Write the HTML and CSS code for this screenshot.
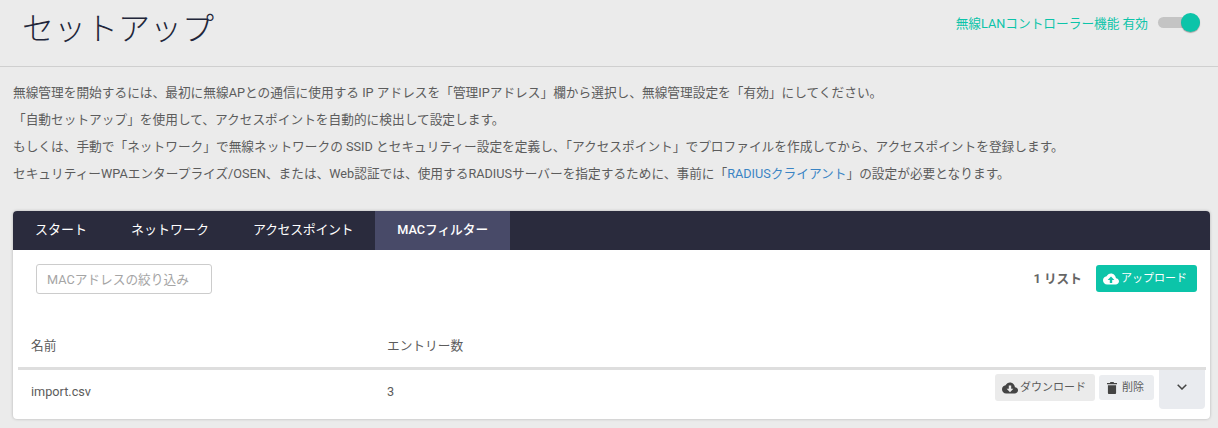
FILE: index.html
```html
<!DOCTYPE html>
<html lang="ja">
<head>
<meta charset="utf-8">
<title>セットアップ</title>
<link rel="stylesheet" href="styles.css">
</head>
<body>
<header class="page-header">
  <h1 class="title">セットアップ</h1>
  <div class="status">
    <span class="status-label">無線LANコントローラー機能 有効</span>
    <span class="toggle"><span class="knob"></span></span>
  </div>
</header>
<section class="intro">
  <p>無線管理を開始するには、最初に無線APとの通信に使用する IP アドレスを「管理IPアドレス」欄から選択し、無線管理設定を「有効」にしてください。</p>
  <p>「自動セットアップ」を使用して、アクセスポイントを自動的に検出して設定します。</p>
  <p>もしくは、手動で「ネットワーク」で無線ネットワークの SSID とセキュリティー設定を定義し、「アクセスポイント」でプロファイルを作成してから、アクセスポイントを登録します。</p>
  <p>セキュリティーWPAエンタープライズ/OSEN、または、Web認証では、使用するRADIUSサーバーを指定するために、事前に「<a class="link" href="#">RADIUSクライアント</a>」の設定が必要となります。</p>
</section>
<main class="card">
  <nav class="tabs">
    <a class="tab">スタート</a>
    <a class="tab">ネットワーク</a>
    <a class="tab tab-tight">アクセスポイント</a>
    <a class="tab active">MACフィルター</a>
  </nav>
  <div class="toolbar">
    <input class="filter" type="text" placeholder="MACアドレスの絞り込み">
    <div class="toolbar-right">
      <span class="count">1 リスト</span>
      <button class="btn btn-primary" type="button">
        <svg class="ico-cloud" viewBox="0 0 20 14" aria-hidden="true"><path fill="#fff" d="M16.2 6.1C16 2.7 13.3 0 10 0 7.6 0 5.5 1.4 4.5 3.5 2 3.8 0 5.900 0 8.500 0 11.500 2.300 14 5.200 14h10.600c2.300 0 4.200-1.900 4.200-4.200 0-1.900-1.600-3.500-3.800-3.700z"/><path fill="#0cc4a9" d="M10 3.800 14.200 8.200h-2.700V12h-3V8.200H5.800z"/></svg>
        <span>アップロード</span>
      </button>
    </div>
  </div>
  <div class="table">
    <div class="row row-head">
      <div class="cell-name">名前</div>
      <div class="cell-count">エントリー数</div>
    </div>
    <div class="row row-body">
      <div class="cell-name">import.csv</div>
      <div class="cell-count">3</div>
      <div class="actions">
        <button class="btn btn-grey" type="button">
          <svg class="ico-cloud" viewBox="0 0 20 14" aria-hidden="true"><path fill="#444" d="M16.2 6.1C16 2.7 13.3 0 10 0 7.6 0 5.5 1.4 4.500 3.500 2 3.800 0 5.900 0 8.500 0 11.500 2.300 14 5.200 14h10.600c2.300 0 4.200-1.900 4.200-4.200 0-1.900-1.600-3.500-3.800-3.700z"/><path fill="#ebebeb" d="M8.500 4h3v3.800h2.700L10 12.200 5.800 7.800h2.700z"/></svg>
          <span>ダウンロード</span>
        </button>
        <button class="btn btn-del" type="button">
          <svg class="ico-trash" viewBox="0 0 11 13" aria-hidden="true"><path fill="#444" d="M3.800 0h3.400l.6 1H11v1.500H0V1h3.200zM1 3.500h9V12a1 1 0 0 1-1 1H2a1 1 0 0 1-1-1z"/></svg>
          <span>削除</span>
        </button>
        <button class="expand" type="button" aria-label="展開">
          <svg class="ico-chev" viewBox="0 0 10 6" aria-hidden="true"><path fill="none" stroke="#444" stroke-width="1.500" d="M.7.700 5 5 9.300.700"/></svg>
        </button>
      </div>
    </div>
  </div>
</main>
</body>
</html>
```
FILE: styles.css
```css
* { box-sizing: border-box; }
html, body { margin: 0; padding: 0; }
body {
  width: 1218px;
  height: 428px;
  overflow: hidden;
  background: #ebebeb;
  color: #5c5c5c;
  font-family: Roboto, "Noto Sans CJK JP", sans-serif;
  font-size: 12.7px;
}
.page-header {
  height: 67px;
  border-bottom: 1px solid #cfcfcf;
  display: flex;
  justify-content: space-between;
  align-items: flex-start;
  padding: 0 13px 0 22px;
}
.title {
  margin: 8px 0 0;
  font-size: 32px;
  line-height: 42px;
  font-weight: 300;
  color: #22263a;
}
.status {
  display: flex;
  align-items: center;
  gap: 10px;
  height: 20px;
  margin-top: 12px;
  margin-right: 5px;
}
.status-label { color: #0cc4a9; font-size: 12.7px; }
.toggle {
  display: block;
  width: 42px;
  height: 11px;
  border-radius: 6px;
  background: #c4c4c4;
  position: relative;
}
.knob {
  position: absolute;
  right: 0;
  top: -4px;
  width: 19px;
  height: 19px;
  border-radius: 50%;
  background: #0cc4a9;
  box-shadow: 0 1px 1px rgba(0,0,0,.3);
}
.intro { padding: 12px 13px 0; height: 144px; }
.intro p { margin: 0; line-height: 27px; white-space: nowrap; }
.link { color: #3a84c4; text-decoration: none; }
.card {
  margin: 0 8px 0 13px;
  height: 208px;
  background: #fff;
  border-radius: 4px;
  box-shadow: 0 0 3px rgba(0,0,0,.25);
  overflow: hidden;
}
.tabs { display: flex; height: 39px; background: #2a2b3d; }
.tab {
  padding: 0 22px;
  line-height: 37px;
  color: #fff;
  font-size: 13px;
}
.tab-tight { letter-spacing: -.4px; }
.tab.active { background: #484a68; font-weight: 500; font-size: 12.7px; width: 135px; white-space: nowrap; }
.toolbar {
  height: 79px;
  display: flex;
  justify-content: space-between;
  padding: 14px 13px 0 23px;
}
.filter {
  width: 176px;
  height: 30px;
  border: 1px solid #ccc;
  border-radius: 3px;
  padding: 0 10px;
  font: inherit;
  outline: none;
}
.filter::placeholder { color: #a5a5a5; opacity: 1; }
.toolbar-right { display: flex; gap: 14px; align-items: flex-start; }
.count { font-weight: 700; color: #666; line-height: 30px; font-size: 12.7px; }
.btn {
  display: flex;
  align-items: center;
  border: 0;
  border-radius: 3px;
  font: inherit;
  font-size: 11px;
  padding: 0 0 0 7px;
  gap: 2px;
  white-space: nowrap;
}
.btn span { position: relative; top: -2px; }
.btn-primary { height: 27px; margin-top: 1px; width: 101px; background: #0cc4a9; color: #fff; }
.btn-grey { height: 27px; width: 100px; background: #ebebeb; color: #5c5c5c; }
.btn-del { height: 25px; width: 55px; margin-top: 1px; background: #ebedf0; color: #5c5c5c; padding-left: 8px; gap: 5px; }
.ico-cloud { width: 16px; height: 12px; }
.ico-trash { width: 10px; height: 12px; }
.table { margin: 0 4px 0 5px; }
.row { display: flex; align-items: center; padding-left: 13px; position: relative; }
.row-head { height: 41px; border-bottom: 3px solid #dedede; padding-bottom: 7px; }
.row-body { height: 47px; padding-bottom: 4px; }
.cell-name { width: 356px; }
.cell-count { width: 300px; }
.actions {
  margin-left: auto;
  display: flex;
  gap: 4px;
  align-items: flex-start;
  height: 47px;
  padding-top: 4px;
  margin-right: 1px;
  align-self: flex-start;
}
.expand {
  display: flex;
  align-items: center;
  justify-content: center;
  width: 46px;
  height: 39px;
  margin-top: -4px;
  margin-left: 1px;
  padding: 0 0 6px;
  border: 0;
  border-radius: 0 0 4px 4px;
  background: #e9ebef;
}
.ico-chev { width: 10px; height: 6px; }
```
